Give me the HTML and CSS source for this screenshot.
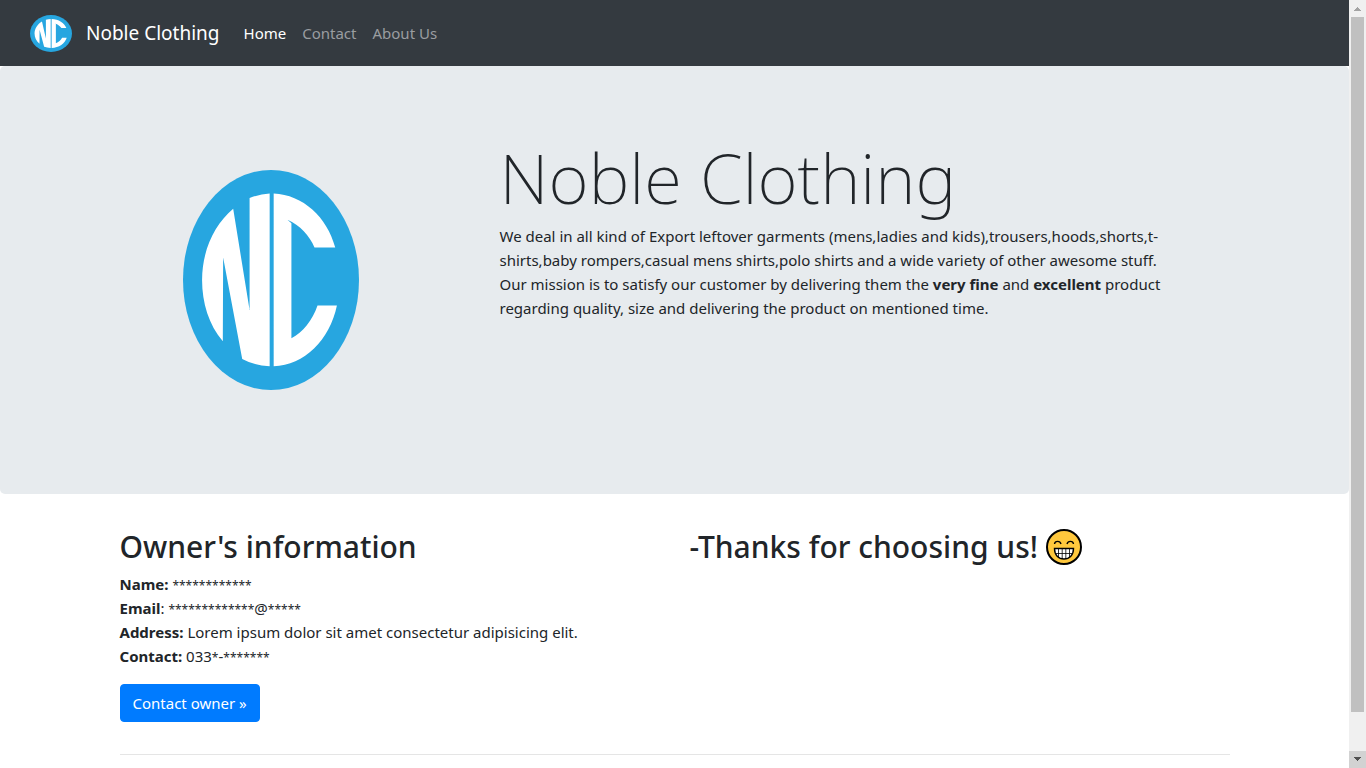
FILE: index.html
```html
<!DOCTYPE html>
<html lang="en">
<head>
<meta charset="utf-8">
<meta name="viewport" content="width=device-width, initial-scale=1">
<title>Noble Clothing</title>
<link rel="stylesheet" href="styles.css">
</head>
<body>
<svg class="sprite" aria-hidden="true">
  <defs>
    <g id="nc-logo">
      <ellipse cx="301" cy="360" rx="263" ry="329" fill="#27a6e0"/>
      <path fill="#fff" d="M157 543C115 494 95 428 95 360C95 272 132 194 188 147L237 450V115Q266 103 297 101V618Q252 616 215 596L158 293Z"/>
      <path fill="#fff" d="M309 101C396 105 469 171 493 263H431C416 227 388 197 350 180L362 190V534C396 516 425 480 440 436H498C476 540 401 614 309 618Z"/>
    </g>
  </defs>
</svg>
<div class="window">
  <div class="page">
    <nav class="navbar">
      <a class="brand" href="#">
        <svg class="brand-logo" viewBox="38 31 526 658" preserveAspectRatio="none" role="img" aria-label="NC"><use href="#nc-logo"/></svg>
        Noble Clothing
      </a>
      <a class="nav-link active" href="#">Home</a>
      <a class="nav-link" href="#">Contact</a>
      <a class="nav-link" href="#">About Us</a>
    </nav>
    <main>
      <section class="hero">
        <div class="container hero-row">
          <div class="hero-picture">
            <svg class="hero-logo" viewBox="38 31 526 658" preserveAspectRatio="none" role="img" aria-label="Noble Clothing logo"><use href="#nc-logo"/></svg>
          </div>
          <div class="hero-text">
            <h1>Noble Clothing</h1>
            <p>We deal in all kind of Export leftover garments (mens,ladies and kids),trousers,hoods,shorts,t-shirts,baby rompers,casual mens shirts,polo shirts and a wide variety of other awesome stuff.<br>Our mission is to satisfy our customer by delivering them the <b>very fine</b> and <b>excellent</b> product regarding quality, size and delivering the product on mentioned time.</p>
          </div>
        </div>
      </section>
      <div class="container">
        <div class="info-row">
          <section class="info">
            <h2>Owner's information</h2>
            <p><b>Name:</b> <span class="mask">************</span><br><b>Email</b>: <span class="mask">*************</span>@<span class="mask">*****</span><br><b>Address:</b> Lorem ipsum dolor sit amet consectetur adipisicing elit.<br><b>Contact:</b> 033<span class="mask">*</span>-<span class="mask">*******</span></p>
            <button class="btn" type="button">Contact owner »</button>
          </section>
          <section class="info">
            <h2 class="thanks">-Thanks for choosing us!<svg class="grin" viewBox="0 0 36 36" role="img" aria-label="Grinning face">
              <circle cx="18" cy="18" r="17" fill="#ffc83d" stroke="#000" stroke-width="2"/>
              <path d="M8.500 15C9 11.500 14 11.500 15 15M21 15C22 11.500 27 11.500 27.500 15" fill="none" stroke="#000" stroke-width="1.400"/>
              <path d="M8.500 19.500H27.500C27.500 26 23.500 30 18 30S8.500 26 8.500 19.500Z" fill="#fff" stroke="#000" stroke-width="1.400"/>
              <path d="M9 24.500H27M12.500 20V28M16.200 20V30M19.800 20V30M23.500 20V28" fill="none" stroke="#000" stroke-width="0.800"/>
            </svg></h2>
          </section>
        </div>
        <hr>
      </div>
    </main>
  </div>
  <div class="scrollbar" aria-hidden="true">
    <svg class="arrow" viewBox="0 0 17 17" shape-rendering="crispEdges"><path d="M8 7h1v1h1v1h1v1h1v1H5v-1h1V9h1V8h1z" fill="#a3a3a3"/></svg>
    <div class="track"><div class="thumb"></div></div>
    <svg class="arrow pressed" viewBox="0 0 17 17" shape-rendering="crispEdges"><path d="M5 6h7v1h-1v1h-1v1H9v1H8V9H7V8H6V7H5z" fill="#505050"/></svg>
  </div>
</div>
</body>
</html>
```
FILE: styles.css
```css
* { box-sizing: border-box; }

body {
  margin: 0;
  background: #fff;
  color: #212529;
  font: 15px/24px "Noto Sans", "Open Sans", sans-serif;
}

.sprite { position: absolute; width: 0; height: 0; }

.window { display: flex; height: 100vh; overflow: hidden; }
.page { flex: 1; min-width: 0; overflow: hidden; }

.navbar {
  display: flex;
  align-items: center;
  gap: 16px;
  min-height: 66px;
  padding: 8px 30px;
  background: #343a40;
}
.brand {
  display: flex;
  align-items: center;
  gap: 14px;
  margin-right: 8px;
  color: #fff;
  font-size: 19px;
  text-decoration: none;
}
.brand-logo { width: 42px; height: 37px; }
.nav-link { color: #9a9da0; text-decoration: none; }
.nav-link.active { color: #fff; }

.container { max-width: 1140px; margin: 0 auto; padding: 0 15px; }

.hero {
  margin-bottom: 32px;
  padding: 64px 32px;
  border-radius: 5px;
  background: #e7ebee;
}
.hero-row { display: grid; grid-template-columns: 1fr 2fr; min-height: 300px; padding: 0; }
.hero-picture { display: flex; align-items: center; padding-left: 78px; }
.hero-logo { width: 176px; height: 220px; }
.hero-text { padding: 0 15px; }

h1 { margin: 0; padding: 4px 0; font-size: 69px; font-weight: 200; line-height: 86px; }
h2 { margin: 0; padding: 2px 0 6px; font-size: 30px; font-weight: 500; line-height: 38px; }
p { margin: 0 0 16px; }

.mask { font-size: 12px; line-height: 16px; }

.info-row { display: grid; grid-template-columns: 1fr 1fr; gap: 30px; }
.thanks { display: flex; align-items: center; gap: 8px; }
.grin { width: 36px; height: 36px; }

.btn {
  padding: 6px 12px;
  border: 1px solid #007bff;
  border-radius: 4px;
  background: #007bff;
  color: #fff;
  font: inherit;
}

hr { margin: 32px 0 16px; border: 0; border-top: 1px solid #e5e5e5; }

.scrollbar { display: flex; flex-direction: column; width: 17px; background: #f0f0f0; }
.arrow { width: 17px; height: 17px; }
.pressed { background: #d2d2d2; }
.track { display: grid; flex: 1; grid-template-rows: 18fr 1fr; padding: 0 2px; }
.thumb { background: #c0c0c0; }
```
